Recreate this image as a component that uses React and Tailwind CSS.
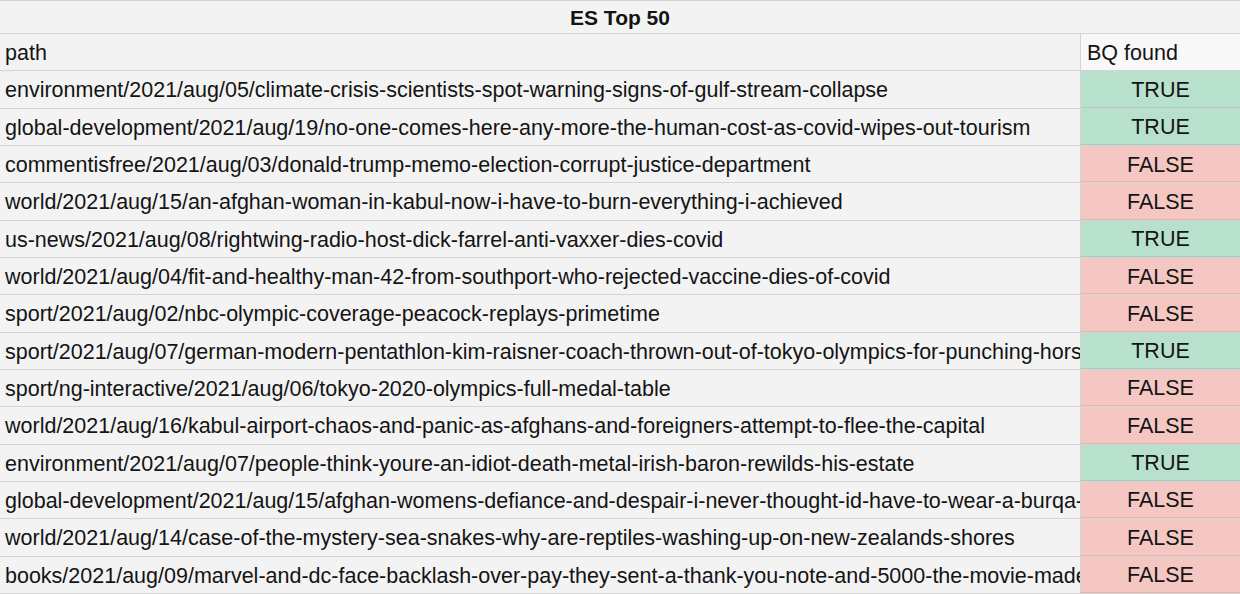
import React from 'react';

const rows = [
  ['environment/2021/aug/05/climate-crisis-scientists-spot-warning-signs-of-gulf-stream-collapse', true],
  ['global-development/2021/aug/19/no-one-comes-here-any-more-the-human-cost-as-covid-wipes-out-tourism', true],
  ['commentisfree/2021/aug/03/donald-trump-memo-election-corrupt-justice-department', false],
  ['world/2021/aug/15/an-afghan-woman-in-kabul-now-i-have-to-burn-everything-i-achieved', false],
  ['us-news/2021/aug/08/rightwing-radio-host-dick-farrel-anti-vaxxer-dies-covid', true],
  ['world/2021/aug/04/fit-and-healthy-man-42-from-southport-who-rejected-vaccine-dies-of-covid', false],
  ['sport/2021/aug/02/nbc-olympic-coverage-peacock-replays-primetime', false],
  ['sport/2021/aug/07/german-modern-pentathlon-kim-raisner-coach-thrown-out-of-tokyo-olympics-for-punching-horse', true],
  ['sport/ng-interactive/2021/aug/06/tokyo-2020-olympics-full-medal-table', false],
  ['world/2021/aug/16/kabul-airport-chaos-and-panic-as-afghans-and-foreigners-attempt-to-flee-the-capital', false],
  ['environment/2021/aug/07/people-think-youre-an-idiot-death-metal-irish-baron-rewilds-his-estate', true],
  ['global-development/2021/aug/15/afghan-womens-defiance-and-despair-i-never-thought-id-have-to-wear-a-burqa-again', false],
  ['world/2021/aug/14/case-of-the-mystery-sea-snakes-why-are-reptiles-washing-up-on-new-zealands-shores', false],
  ['books/2021/aug/09/marvel-and-dc-face-backlash-over-pay-they-sent-a-thank-you-note-and-5000-the-movie-made-billions', false],
];

const App = () => {
  return (
    <div
      className="w-[1240px] h-[594px] overflow-hidden bg-[#f3f3f3] text-[#141414]"
      style={{ fontFamily: '"Liberation Sans", Arial, sans-serif' }}
    >
      {/* Title row */}
      <div className="h-[34px] border-t border-b border-[#d4d4d4] flex items-center justify-center pt-[2px]">
        <span className="text-[21px] font-bold">ES Top 50</span>
      </div>

      {/* Header row */}
      <div className="h-[37.33px] flex border-b border-[#d4d4d4]">
        <div className="w-[1081px] shrink-0 border-r border-[#d4d4d4] px-[5px] pt-[2px] flex items-center text-[21.5px]">path</div>
        <div className="flex-1 bg-[#f8f8f8] px-[6px] pt-[2px] flex items-center text-[21.5px]">BQ found</div>
      </div>

      {/* Data rows */}
      {rows.map(([path, found], i) => (
        <div key={i} className="h-[37.33px] flex border-b border-[#d4d4d4]">
          <div className="w-[1081px] shrink-0 border-r border-[#d4d4d4] pl-[5px] pt-[2px] flex items-center overflow-hidden whitespace-nowrap text-[21.5px]">
            {path}
          </div>
          <div
            className={
              found
                ? 'flex-1 bg-[#b7e1cd] pt-[2px] flex items-center justify-center text-[21.5px] border-b border-[#a6cfbb]'
                : 'flex-1 bg-[#f4c7c3] pt-[2px] flex items-center justify-center text-[21.5px] border-b border-[#e3b3ae]'
            }
          >
            {found ? 'TRUE' : 'FALSE'}
          </div>
        </div>
      ))}
    </div>
  );
};

export default App;
